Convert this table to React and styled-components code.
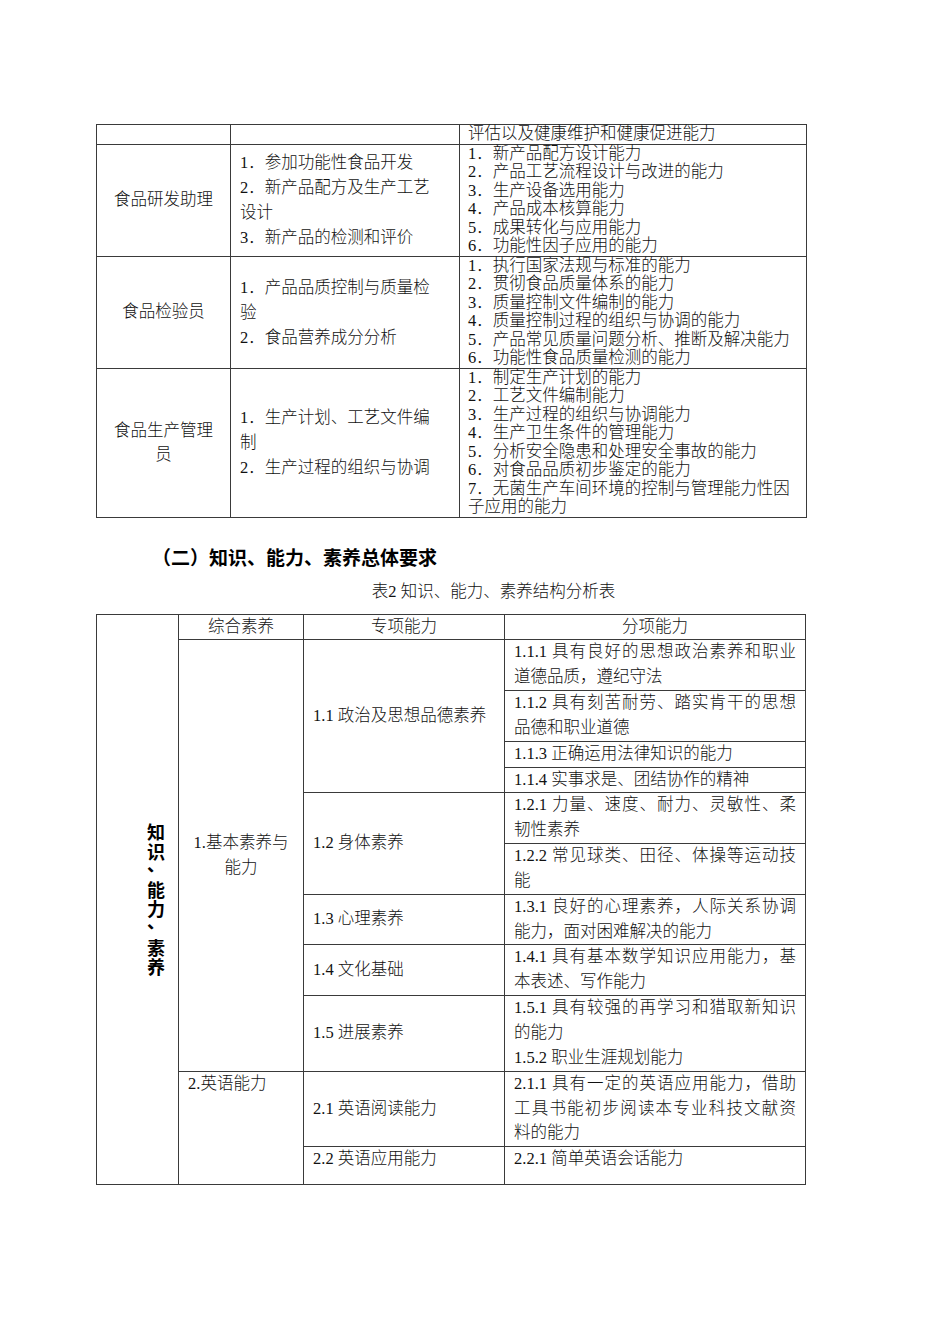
import { Fragment } from "react"
import styled, { createGlobalStyle } from "styled-components"

const GlobalStyle = createGlobalStyle`
  html, body {
    margin: 0;
    padding: 0;
    background: #fff;
  }
  body {
    font-family: "Liberation Serif", "Noto Sans CJK SC", serif;
    color: #111;
  }
`

const jobs = [
  {
    role: ["食品研发助理"],
    duties: ["1．参加功能性食品开发", "2．新产品配方及生产工艺", "设计", "3．新产品的检测和评价"],
    abilities: [
      "1．新产品配方设计能力",
      "2．产品工艺流程设计与改进的能力",
      "3．生产设备选用能力",
      "4．产品成本核算能力",
      "5．成果转化与应用能力",
      "6．功能性因子应用的能力",
    ],
  },
  {
    role: ["食品检验员"],
    duties: ["1．产品品质控制与质量检", "验", "2．食品营养成分分析"],
    abilities: [
      "1．执行国家法规与标准的能力",
      "2．贯彻食品质量体系的能力",
      "3．质量控制文件编制的能力",
      "4．质量控制过程的组织与协调的能力",
      "5．产品常见质量问题分析、推断及解决能力",
      "6．功能性食品质量检测的能力",
    ],
  },
  {
    role: ["食品生产管理", "员"],
    duties: ["1．生产计划、工艺文件编", "制", "2．生产过程的组织与协调"],
    abilities: [
      "1．制定生产计划的能力",
      "2．工艺文件编制能力",
      "3．生产过程的组织与协调能力",
      "4．生产卫生条件的管理能力",
      "5．分析安全隐患和处理安全事故的能力",
      "6．对食品品质初步鉴定的能力",
      "7．无菌生产车间环境的控制与管理能力性因",
      "子应用的能力",
    ],
  },
]

const groups = [
  {
    comp: ["1.基本素养与", "能力"],
    align: "center",
    valign: "middle",
    items: [
      {
        spec: "1.1 政治及思想品德素养",
        subs: [
          [["1.1.1 具有良好的思想政治素养和职业", "道德品质，遵纪守法"]],
          [["1.1.2 具有刻苦耐劳、踏实肯干的思想", "品德和职业道德"]],
          [["1.1.3 正确运用法律知识的能力"]],
          [["1.1.4 实事求是、团结协作的精神"]],
        ],
      },
      {
        spec: "1.2 身体素养",
        subs: [
          [["1.2.1 力量、速度、耐力、灵敏性、柔", "韧性素养"]],
          [["1.2.2 常见球类、田径、体操等运动技", "能"]],
        ],
      },
      {
        spec: "1.3 心理素养",
        subs: [[["1.3.1 良好的心理素养，人际关系协调", "能力，面对困难解决的能力"]]],
      },
      {
        spec: "1.4 文化基础",
        subs: [[["1.4.1 具有基本数学知识应用能力，基", "本表述、写作能力"]]],
      },
      {
        spec: "1.5 进展素养",
        subs: [[["1.5.1 具有较强的再学习和猎取新知识", "的能力"], ["1.5.2 职业生涯规划能力"]]],
      },
    ],
  },
  {
    comp: ["2.英语能力"],
    align: "left",
    valign: "top",
    items: [
      {
        spec: "2.1 英语阅读能力",
        subs: [[["2.1.1 具有一定的英语应用能力，借助", "工具书能初步阅读本专业科技文献资", "料的能力"]]],
      },
      {
        spec: "2.2 英语应用能力",
        valign: "top",
        extra: 12,
        subs: [[["2.2.1 简单英语会话能力"]]],
      },
    ],
  },
]

const verticalTitle = [..."知识、能力、素养"]

export default function App() {
  const table2Rows = []
  groups.forEach((g, gi) => {
    const groupSpan = g.items.reduce((n, it) => n + it.subs.length, 0)
    g.items.forEach((it, ii) => {
      it.subs.forEach((paras, si) => {
        table2Rows.push(
          <tr key={`${gi}-${ii}-${si}`}>
            {ii === 0 && si === 0 && (
              <Cell rowSpan={groupSpan} $align={g.align} $valign={g.valign}>
                {g.comp.map((l) => (
                  <Line key={l}>{l}</Line>
                ))}
              </Cell>
            )}
            {si === 0 && (
              <Cell rowSpan={it.subs.length} $valign={it.valign || "middle"}>
                {it.spec}
              </Cell>
            )}
            <Cell $valign="top" $padBottom={it.extra}>
              {paras.map((para) =>
                para.map((l, li) => (
                  <Line key={l} $justify={li < para.length - 1}>
                    {l}
                  </Line>
                ))
              )}
            </Cell>
          </tr>
        )
      })
    })
  })

  return (
    <Page>
      <GlobalStyle />
      <JobTable>
        <colgroup>
          <Col $w={134} />
          <Col $w={229} />
          <Col $w={347} />
        </colgroup>
        <tbody>
          <tr>
            <Cell />
            <Cell />
            <Cell $lh={18.5} $pad="0 4px 0 8px">
              评估以及健康维护和健康促进能力
            </Cell>
          </tr>
          {jobs.map((job) => (
            <tr key={job.role[0]}>
              <Cell $align="center" $lh={24}>
                {job.role.map((l) => (
                  <Line key={l}>{l}</Line>
                ))}
              </Cell>
              <Cell>
                {job.duties.map((l) => (
                  <Line key={l}>{l}</Line>
                ))}
              </Cell>
              <Cell $lh={18.5} $pad="0 4px 0 8px">
                {job.abilities.map((l) => (
                  <Line key={l}>{l}</Line>
                ))}
              </Cell>
            </tr>
          ))}
        </tbody>
      </JobTable>

      <SectionTitle>（二）知识、能力、素养总体要求</SectionTitle>
      <Caption>表2 知识、能力、素养结构分析表</Caption>

      <SkillTable>
        <colgroup>
          <Col $w={82} />
          <Col $w={125} />
          <Col $w={201} />
          <Col $w={301} />
        </colgroup>
        <tbody>
          <tr>
            <VerticalCell rowSpan={12}>
              <VerticalText>
                {verticalTitle.map((ch, i) => (
                  <Fragment key={i}>
                    {ch === "、" ? <Comma>{ch}</Comma> : ch}
                    {i < verticalTitle.length - 1 && <br />}
                  </Fragment>
                ))}
              </VerticalText>
            </VerticalCell>
            <Cell $align="center">综合素养</Cell>
            <Cell $align="center">专项能力</Cell>
            <Cell $align="center">分项能力</Cell>
          </tr>
          {table2Rows}
        </tbody>
      </SkillTable>
    </Page>
  )
}

const Page = styled.div`
  width: 950px;
  min-height: 1344px;
  box-sizing: border-box;
  padding: 124px 0 0 96px;
  font-size: 16.5px;
`

const Table = styled.table`
  border-collapse: collapse;
  table-layout: fixed;
  font-weight: 300;
`

const Col = styled.col`
  width: ${(p) => p.$w}px;
`

const Cell = styled.td`
  border: 1px solid #3a3a3a;
  padding: ${(p) => p.$pad || `0 9px ${p.$padBottom || 0}px 9px`};
  line-height: ${(p) => p.$lh || 25}px;
  text-align: ${(p) => p.$align || "left"};
  vertical-align: ${(p) => p.$valign || "middle"};
  white-space: nowrap;
`

const JobTable = styled(Table)`
  width: 710px;
`

const SkillTable = styled(Table)`
  width: 709px;

  ${Cell} {
    line-height: 24.85px;
  }
`

const Line = styled.div`
  white-space: nowrap;
  ${(p) =>
    p.$justify &&
    `
    text-align: justify;
    text-align-last: justify;
  `}
`

const SectionTitle = styled.h2`
  margin: 25px 0 0 56px;
  font-family: "Noto Sans CJK SC", sans-serif;
  font-size: 19px;
  font-weight: 700;
  line-height: 28px;
  color: #000;
`

const Caption = styled.div`
  width: 709px;
  box-sizing: border-box;
  margin-top: 10px;
  padding-left: 86px;
  text-align: center;
  font-size: 16.5px;
  font-weight: 300;
  line-height: 22px;
  margin-bottom: 11px;
`

const VerticalCell = styled.td`
  border: 1px solid #3a3a3a;
  padding: 0 0 0 50px;
  vertical-align: middle;
`

const VerticalText = styled.div`
  font-family: "Noto Sans CJK SC", sans-serif;
  font-weight: 700;
  font-size: 18px;
  line-height: 19.2px;
  text-align: left;
  color: #000;
`

const Comma = styled.span`
  line-height: 0;
  vertical-align: 7px;
`
